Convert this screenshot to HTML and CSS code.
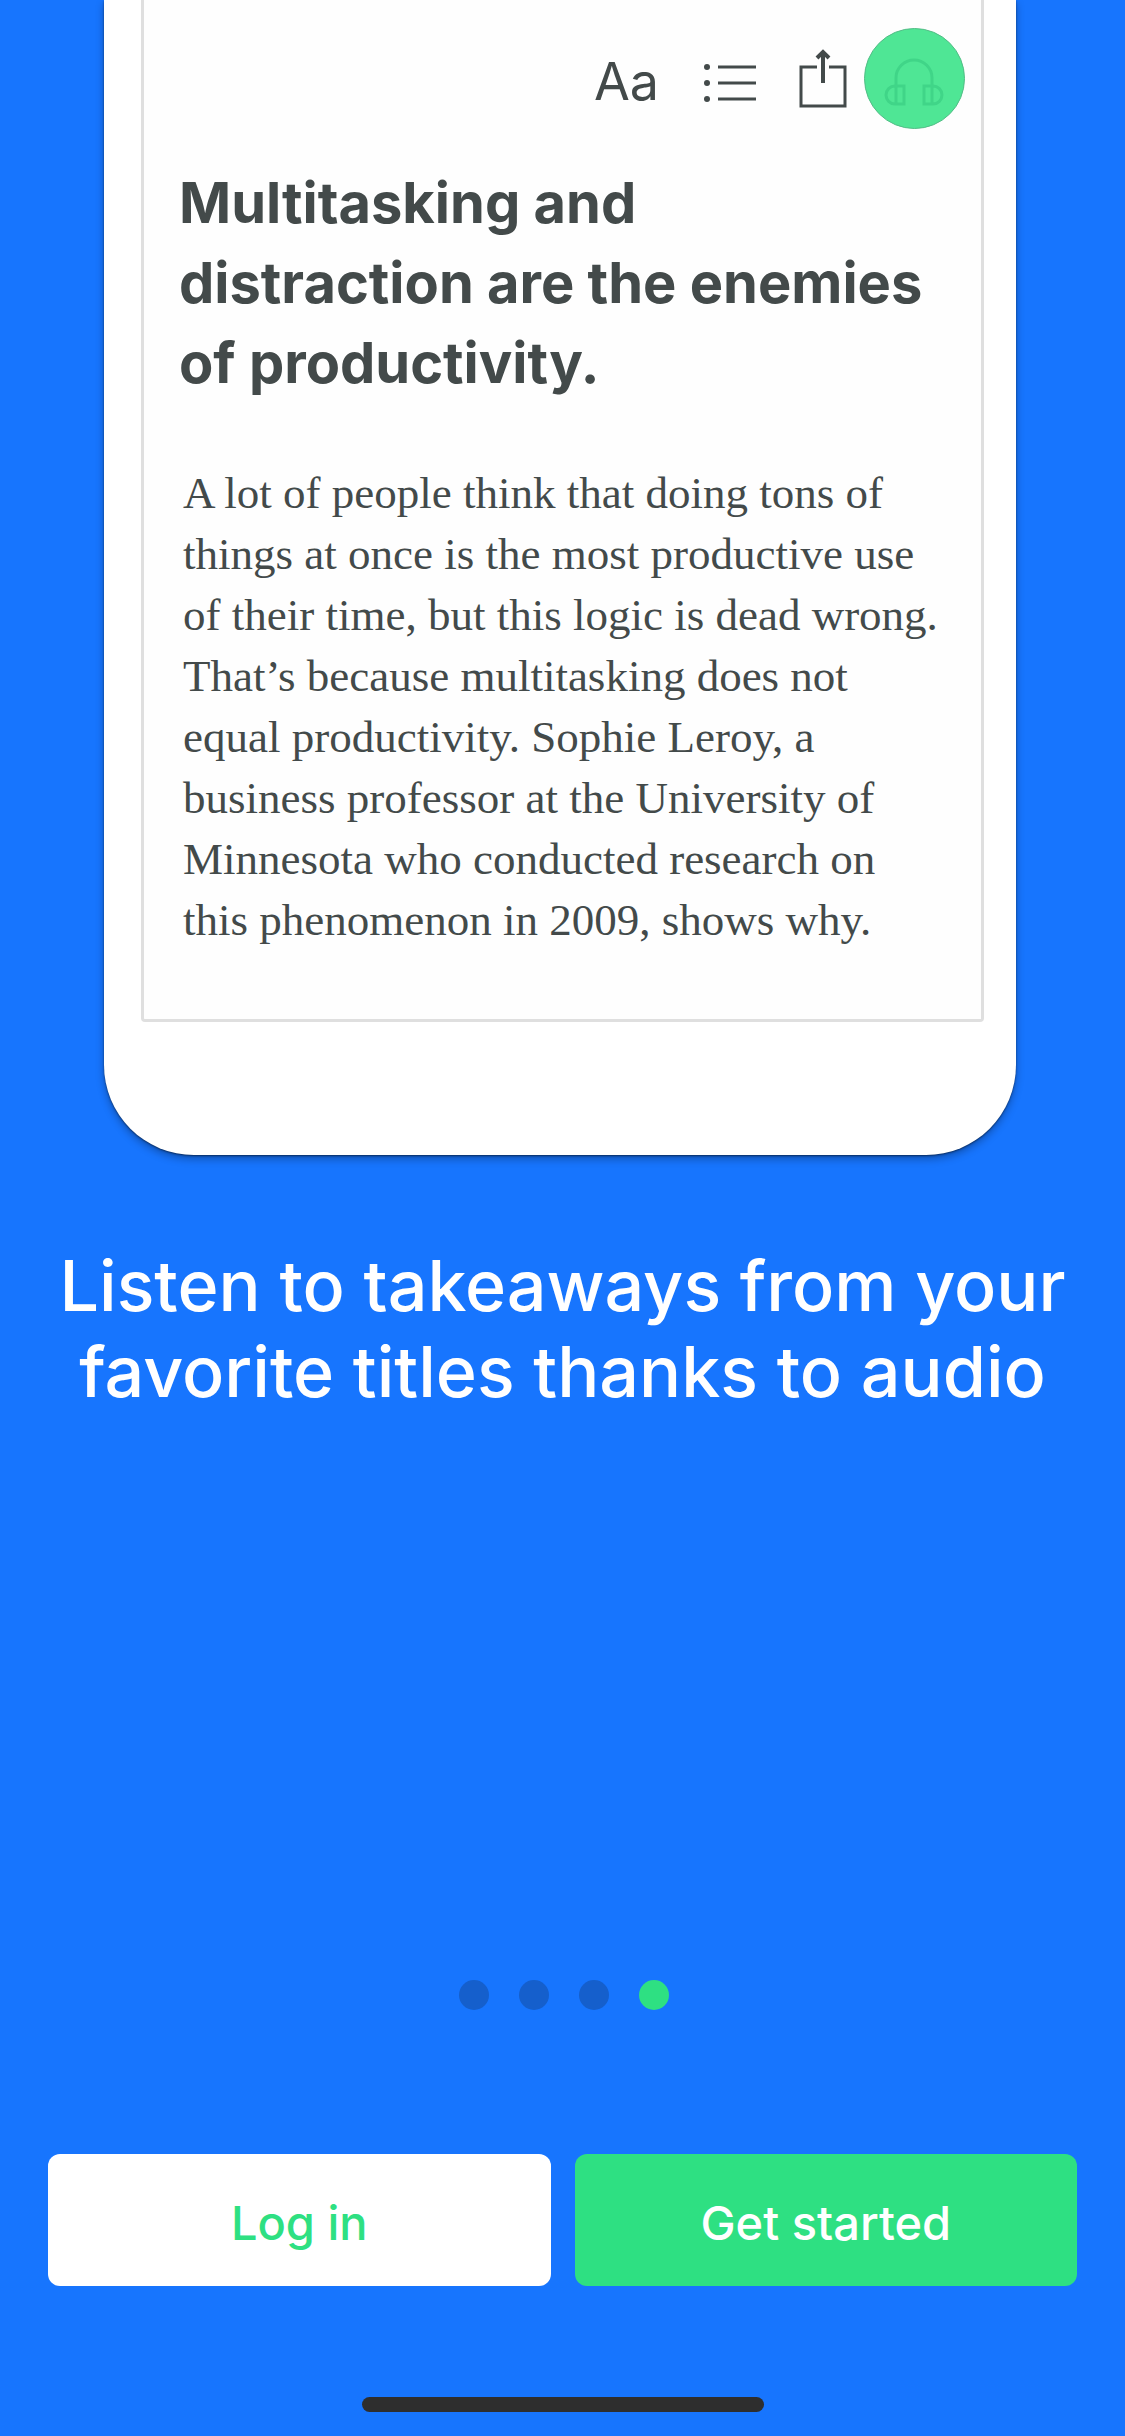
FILE: index.html
```html
<!DOCTYPE html>
<html lang="en">
<head>
<meta charset="utf-8">
<meta name="viewport" content="width=device-width, initial-scale=1">
<title>Welcome</title>
<link rel="stylesheet" href="styles.css">
</head>
<body>
<main class="onboarding">
  <section class="preview">
    <div class="phone">
      <article class="reader">
        <div class="toolbar">
          <button class="tool tool-text" type="button" aria-label="Text size">Aa</button>
          <button class="tool" type="button" aria-label="Contents">
            <svg width="54" height="101" viewBox="0 0 54 101" fill="none" stroke="#434a4a" stroke-width="3">
              <path d="M16 39h38M16 55h38M16 71h38"/>
              <g fill="#434a4a" stroke="none"><circle cx="5" cy="39" r="3"/><circle cx="5" cy="55" r="3"/><circle cx="5" cy="71" r="3"/></g>
            </svg>
          </button>
          <button class="tool" type="button" aria-label="Share">
            <svg width="48" height="101" viewBox="0 0 48 101" fill="none" stroke="#434a4a" stroke-width="3">
              <path d="M18 39H2v39h44V39H30"/>
              <path d="M24 55V25M18 30l6-6 6 6" stroke-width="4"/>
            </svg>
          </button>
          <button class="tool tool-audio" type="button" aria-label="Listen">
            <svg width="99" height="99" viewBox="0 0 99 99" fill="none" stroke="#40d588" stroke-width="3">
              <path d="M31 57V49a18 18 0 0 1 36 0v8"/>
              <path d="M39 57h-9a9 9 0 0 0 0 18h9zM31 57v18M59 57h9a9 9 0 0 1 0 18h-9zM67 57v18"/>
            </svg>
          </button>
        </div>
        <h2 class="reader-title">Multitasking and<br>distraction are the enemies<br>of productivity.</h2>
        <p class="reader-text">A lot of people think that doing tons of<br>things at once is the most productive use<br>of their time, but this logic is dead wrong.<br>That’s because multitasking does not<br>equal productivity. Sophie Leroy, a<br>business professor at the University of<br>Minnesota who conducted research on<br>this phenomenon in 2009, shows why.</p>
      </article>
    </div>
  </section>
  <h1 class="caption">Listen to takeaways from your<br>favorite titles thanks to audio</h1>
  <footer class="footer">
    <div class="dots" role="img" aria-label="Page 4 of 4">
      <span class="dot"></span><span class="dot"></span><span class="dot"></span><span class="dot dot-active"></span>
    </div>
    <div class="actions">
      <button class="action action-login" type="button">Log in</button>
      <button class="action action-start" type="button">Get started</button>
    </div>
    <div class="home-bar"></div>
  </footer>
</main>
</body>
</html>
```
FILE: styles.css
```css
* { box-sizing: border-box; }

body {
  margin: 0;
  background: #1775fe;
  font-family: Inter, "Liberation Sans", sans-serif;
}

button {
  margin: 0;
  padding: 0;
  border: 0;
  background: none;
  font-family: inherit;
}

.onboarding {
  display: flex;
  flex-direction: column;
  min-height: 100vh;
}

.preview { padding: 0 109px 0 104px; }

.phone {
  padding: 0 32px 133px 37px;
  border-radius: 0 0 90px 90px;
  background: #fff;
  box-shadow: 0 1px 2px rgba(0, 0, 0, .5), 0 4px 8px rgba(0, 0, 0, .3);
}

.reader {
  padding: 28px 16px 68px 35px;
  border: 3px solid #dfdfdf;
  border-top: 0;
  border-radius: 0 0 4px 4px;
  background: #fefefe;
  color: #434a4a;
}

.toolbar {
  display: flex;
  justify-content: flex-end;
  align-items: center;
  height: 101px;
}

.tool {
  display: block;
  margin-left: 43px;
  color: #434a4a;
}

.tool svg { display: block; }

.tool-text {
  padding-top: 6px;
  font-size: 52px;
  line-height: 60px;
}

.tool-audio {
  margin-left: 17px;
  border: 1px solid #52bd86;
  border-radius: 50%;
  background: #4fe695;
}

.reader-title {
  margin: 34px 0 60px;
  font-size: 56px;
  line-height: 80px;
  font-weight: 700;
  white-space: nowrap;
}

.reader-text {
  margin: 0;
  padding-left: 4px;
  font-family: "Liberation Serif", serif;
  font-size: 45px;
  line-height: 61px;
  white-space: nowrap;
}

.caption {
  margin: 88px 0 0;
  color: #fff;
  font-size: 70px;
  line-height: 86px;
  font-weight: 500;
  text-align: center;
}

.footer {
  margin-top: auto;
  padding: 0 48px 24px;
}

.dots {
  display: flex;
  justify-content: center;
  gap: 30px;
  padding-left: 3px;
}

.dot {
  width: 30px;
  height: 30px;
  border-radius: 50%;
  background: #155fcc;
}

.dot-active { background: #2ee082; }

.actions {
  display: flex;
  gap: 24px;
  margin: 144px 0 111px;
}

.action {
  flex: 1;
  height: 132px;
  padding-top: 4px;
  border-radius: 12px;
  font-size: 47px;
  font-weight: 500;
}

.action-login {
  background: #fff;
  color: #2ee082;
}

.action-start {
  background: #2ee082;
  color: #fff;
}

.home-bar {
  width: 402px;
  height: 15px;
  margin: 0 auto;
  border-radius: 8px;
  background: #2e2e2e;
}
```
